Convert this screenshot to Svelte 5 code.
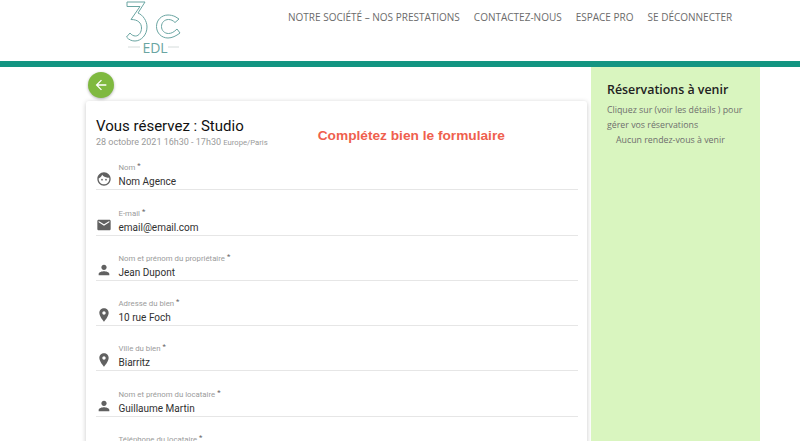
<script>
  const person = "M12 12c2.2 0 4-1.8 4-4s-1.8-4-4-4-4 1.8-4 4 1.8 4 4 4zm0 2c-2.7 0-8 1.3-8 4v2h16v-2c0-2.7-5.3-4-8-4z";
  const mail = "M20 4H4c-1.1 0-2 .9-2 2v12c0 1.1.9 2 2 2h16c1.1 0 2-.9 2-2V6c0-1.1-.9-2-2-2zm0 4l-8 5-8-5V6l8 5 8-5v2z";
  const pin = "M12 2C8.1 2 5 5.1 5 9c0 5.2 7 13 7 13s7-7.8 7-13c0-3.900-3.100-7-7-7zm0 9.500c-1.400 0-2.500-1.100-2.500-2.500s1.100-2.500 2.500-2.500 2.500 1.100 2.500 2.500-1.100 2.500-2.500 2.500z";
  const face = "M9 11.750a1.250 1.250 0 1 0 0 2.500 1.250 1.250 0 0 0 0-2.500zm6 0a1.250 1.250 0 1 0 0 2.500 1.250 1.250 0 0 0 0-2.500zM12 2C6.480 2 2 6.480 2 12s4.480 10 10 10 10-4.480 10-10S17.520 2 12 2zm0 18c-4.410 0-8-3.590-8-8 0-.290.020-.580.050-.860 2.360-1.050 4.230-2.980 5.210-5.370C11.070 8.330 14.050 10 17.420 10c.780 0 1.530-.090 2.250-.260.210.710.330 1.470.330 2.260 0 4.410-3.590 8-8 8z";

  const fields = [
    { label: "Nom", value: "Nom Agence", icon: face },
    { label: "E-mail", value: "email@email.com", icon: mail },
    { label: "Nom et prénom du propriétaire", value: "Jean Dupont", icon: person },
    { label: "Adresse du bien", value: "10 rue Foch", icon: pin },
    { label: "Ville du bien", value: "Biarritz", icon: pin },
    { label: "Nom et prénom du locataire", value: "Guillaume Martin", icon: person },
    { label: "Téléphone du locataire", value: "06 12 34 56 78", icon: person }
  ];
</script>

<div class="page">
  <header>
    <svg class="logo" viewBox="0 0 60 61" width="60" height="61" fill="none" stroke="#6aa5a2" stroke-width="1">
      <path d="M2 2 H20 L13 13 C18 15 22 21 22 27 C22 35 16 41 10 41 C7 41 4 40 1.500 37 L5 33 C6.500 35 8.500 36 10.500 36 C14 36 16.500 32 16.500 28 C16.500 23 13 19.500 6 19.500 L15 6.500 H2 Z" />
      <path d="M50 16.500 C47.500 15.500 45.500 15 43 15 C36.500 15 31.500 20 31.500 26.500 C31.500 33 36.500 38 43 38 C47 38 51 36 55 33 L52 29 C49 32 46.500 33.500 43.500 33.500 C39.500 33.500 36.500 30.500 36.500 26.500 C36.500 22.500 39.500 19.500 43.500 19.500 C46 19.500 48 20.500 50 22.500 L54 19 Z" />
      <path d="M3 47 H15 M43 47 H54" stroke="#d5dcdb" />
      <text x="30" y="53" text-anchor="middle" stroke="none" fill="#6aa5a2" class="edl">EDL</text>
    </svg>
    <nav>
      <span>NOTRE SOCIÉTÉ – NOS PRESTATIONS</span>
      <span>CONTACTEZ-NOUS</span>
      <span>ESPACE PRO</span>
      <span>SE DÉCONNECTER</span>
    </nav>
  </header>
  <div class="bar"></div>

  <div class="content">
    <main>
      <button class="back" aria-label="Retour">
        <svg viewBox="0 0 24 24" width="16" height="16" fill="#fff">
          <path d="M20 11H7.800l5.600-5.600L12 4l-8 8 8 8 1.400-1.400L7.800 13H20z" />
        </svg>
      </button>
      <section class="card">
        <div class="head">
          <div>
            <h1>Vous réservez : Studio</h1>
            <p class="when">28 octobre 2021 16h30 - 17h30 <small>Europe/Paris</small></p>
          </div>
          <strong class="notice">Complétez bien le formulaire</strong>
        </div>
        {#each fields as f}
          <div class="field">
            <svg viewBox="0 0 24 24" width="16" height="16" fill="#616161"><path d={f.icon} /></svg>
            <div class="input">
              <span class="label">{f.label} <i>*</i></span>
              <span class="value">{f.value}</span>
            </div>
          </div>
        {/each}
      </section>
    </main>
    <aside>
      <h2>Réservations à venir</h2>
      <p>Cliquez sur (voir les détails ) pour gérer vos réservations</p>
      <p class="none">Aucun rendez-vous à venir</p>
    </aside>
  </div>
</div>

<style>
  :global(body) {
    margin: 0;
    background: #fff;
    overflow: hidden;
  }
  .page {
    height: 441px;
    overflow: hidden;
    font-family: Roboto, sans-serif;
  }
  header {
    height: 61px;
    display: flex;
    padding-left: 125px;
    box-sizing: border-box;
    overflow: hidden;
  }
  .logo {
    flex: none;
    display: block;
  }
  .edl {
    font: 14px "Open Sans", sans-serif;
  }
  nav {
    display: flex;
    gap: 14px;
    margin-left: 103px;
    padding-top: 10px;
    font: 10px/14px "Open Sans", sans-serif;
    color: #6b6b6b;
  }
  .bar {
    height: 6px;
    background: #139582;
  }
  .content {
    display: flex;
    padding-left: 86px;
  }
  main {
    width: 501px;
    flex: none;
    padding-top: 5px;
  }
  .back {
    display: flex;
    align-items: center;
    justify-content: center;
    width: 26px;
    height: 26px;
    padding: 0;
    margin: 0 0 3px 2px;
    border: 0;
    border-radius: 50%;
    background: #7fb93f;
    box-shadow: 0 1px 3px rgba(0, 0, 0, 0.3);
  }
  .card {
    padding: 16px 9px 0 10px;
    border-radius: 3px;
    box-shadow: 0 1px 5px rgba(0, 0, 0, 0.22);
    height: 400px;
  }
  .head {
    display: flex;
    gap: 50px;
    height: 28px;
  }
  h1 {
    margin: 0;
    font-size: 15px;
    line-height: 19px;
    font-weight: 400;
    color: #111;
  }
  .when {
    margin: 0;
    font-size: 9px;
    line-height: 12px;
    color: #9a9a9a;
  }
  .when small {
    font-size: 7.700px;
  }
  .notice {
    margin-top: 11px;
    font: bold 13.700px/16px "Liberation Sans", sans-serif;
    color: #ef5f4e;
  }
  .field {
    display: flex;
    align-items: flex-end;
    gap: 7px;
    height: 45.300px;
    box-sizing: border-box;
    border-bottom: 1px solid #e6e6e6;
  }
  .field svg {
    flex: none;
    margin-left: -0.500px;
    margin-bottom: 2px;
  }
  .input {
    display: flex;
    flex-direction: column;
    gap: 2px;
  }
  .label {
    font-size: 7.800px;
    line-height: 10px;
    color: #9b9b9b;
  }
  .label i {
    font-style: normal;
    color: #666;
    vertical-align: 2px;
  }
  .value {
    font-size: 10px;
    line-height: 14px;
    color: #303030;
  }
  aside {
    box-sizing: border-box;
    width: 169px;
    height: 374px;
    margin-left: 4px;
    padding: 14px 16px;
    background: #d9f5bf;
    font-family: "Open Sans", sans-serif;
  }
  h2 {
    margin: 0 0 4px;
    font-size: 12.400px;
    line-height: 18px;
    font-weight: 600;
    color: #222;
  }
  aside p {
    margin: 0;
    font-size: 8.800px;
    line-height: 15px;
    color: #6e6e6e;
  }
  aside .none {
    padding-left: 9px;
  }
</style>
